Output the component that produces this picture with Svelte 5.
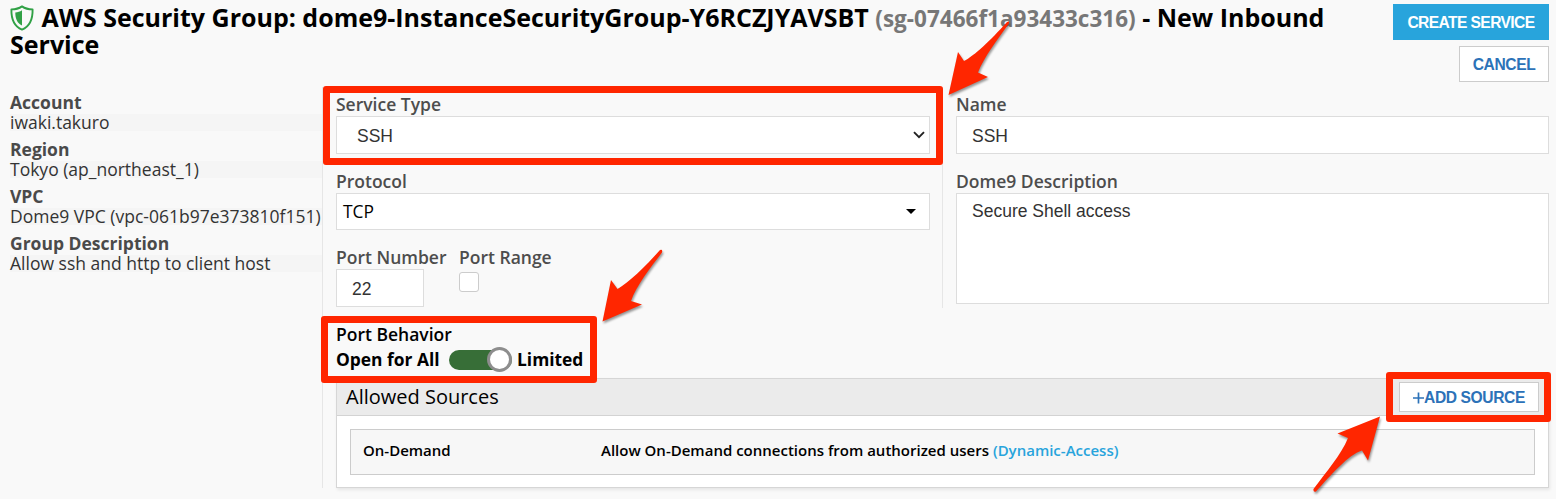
<script>
  const details = [
    ['Account', 'iwaki.takuro'],
    ['Region', 'Tokyo (ap_northeast_1)'],
    ['VPC', 'Dome9 VPC (vpc-061b97e373810f151)'],
    ['Group Description', 'Allow ssh and http to client host']
  ];
</script>

<div class="page">
  <header>
    <h1>
      <svg class="shield" viewBox="0 0 24 26" width="24" height="26"><path d="M12 1.4C9 3.5 5 4.4 1.4 4.4C1.2 14 3.5 21 12 24.6C20.500 21 22.800 14 22.600 4.400C19 4.400 15 3.500 12 1.400Z" fill="none" stroke="#31a146" stroke-width="1.9" stroke-linejoin="round" /><path d="M12 5.200C10 6.600 7.800 7.300 5.300 7.500C5.300 13.500 7 18 12 20.600Z" fill="#31a146" /></svg>
      AWS Security Group: dome9-InstanceSecurityGroup-Y6RCZJYAVSBT
      <span class="gid">(sg-07466f1a93433c316)</span>
      - New Inbound Service
    </h1>
    <div class="buttons">
      <button class="primary">CREATE SERVICE</button>
      <button class="cancel">CANCEL</button>
    </div>
  </header>

  <div class="body">
    <aside>
      {#each details as [label, value]}
        <div class="detail"><b>{label}</b><div><span>{value}</span></div></div>
      {/each}
    </aside>
    <main>
      <div class="form">
        <section class="left">
          <div class="field first">
            <div class="label">Service Type</div>
            <div class="control select"><span>SSH</span>
              <svg width="12" height="8" viewBox="0 0 12 8"><path d="M1 1.200L6 6.200L11 1.200" fill="none" stroke="#222" stroke-width="1.900" /></svg>
            </div>
          </div>
          <div class="field second">
            <div class="label">Protocol</div>
            <div class="control protocol"><span>TCP</span><i></i></div>
          </div>
          <div class="ports">
            <div class="number"><div class="label">Port Number</div><div class="control port">22</div></div>
            <div><div class="label">Port Range</div><div class="check"></div></div>
          </div>
        </section>
        <section class="right">
          <div class="field first"><div class="label">Name</div><div class="control text">SSH</div></div>
          <div class="field second"><div class="label">Dome9 Description</div><div class="control area">Secure Shell access</div></div>
        </section>
      </div>
      <div class="behavior">
        <div class="label">Port Behavior</div>
        <div class="switch"><b class="open">Open for All</b><div class="track"><div class="knob"></div></div><b class="limited">Limited</b></div>
      </div>
      <div class="card">
        <div class="cardhead"><span>Allowed Sources</span>
          <button class="add"><svg width="11" height="12" viewBox="0 0 11 12"><path d="M5.500 0.500V11.500M0 6H11" stroke="#2c72b8" stroke-width="1.700" /></svg>ADD SOURCE</button>
        </div>
        <div class="row"><span class="kind">On-Demand</span><span class="desc">Allow On-Demand connections from authorized users <span class="link">(Dynamic-Access)</span></span></div>
      </div>
    </main>
  </div>

  <div class="mark m1"></div>
  <div class="mark m2"></div>
  <div class="mark m3"></div>
  <svg class="arrows" width="1556" height="499" viewBox="0 0 1556 499">
    <g fill="#ff2600">
      <path d="M948.500 95L958 52L964 61C974 56 991 40 1006.500 22.500Q1009.500 20 1009 23.500C997 40 984 57 978 72.500L988 77Z" />
      <path d="M602.500 321.500L611 280L617.500 289C628 283 645 267 660 250Q663 249 662 252.500C651 267 636 286 631 301L642 304.500Z" />
      <path d="M1380 416.500L1337.500 433.500L1348 438C1341 455 1326 472 1313.500 489Q1313 492.500 1316 491.500C1332 474 1348 455 1362 450.500L1368 460.500Z" />
    </g>
  </svg>
</div>

<style>
  :global(body) { margin: 0; background: #f9f9f9; }
  .page, .page * { box-sizing: border-box; }
  .page { position: relative; width: 1556px; height: 499px; overflow: hidden; font-family: "Open Sans", sans-serif; color: #000; background: #f9f9f9; }
  header { display: flex; justify-content: space-between; height: 87px; padding: 4px 7px 0 10px; }
  h1 { margin: 0; width: 1340px; font-size: 25px; line-height: 27px; font-weight: 700; }
  .shield { vertical-align: -4px; margin: -1px 1px -4px 0; transform: translateY(-4px); }
  .gid { font-size: 22.500px; line-height: 20px; color: #777; }
  .buttons { display: flex; flex-direction: column; align-items: flex-end; gap: 6px; }
  button { font: 700 15.600px "Liberation Sans", Arial, sans-serif; height: 36px; padding: 1px 0 0; border: 1px solid #ccc; background: #fff; color: #2c72b8; white-space: nowrap; letter-spacing: -.4px; }
  .primary { width: 156px; background: #28a4dc; border-color: #28a4dc; color: #fff; letter-spacing: -.6px; }
  .cancel { width: 90px; }
  .body { display: flex; height: 401px; }
  aside { width: 323px; padding: 6px 0 0 10px; border-right: 1px solid #e6e6e6; }
  .detail { height: 47px; font-size: 17.500px; line-height: 20px; white-space: nowrap; color: #333; }
  .detail b { display: block; height: 20px; line-height: 18px; color: #4a4a4a; }
  .detail > div { height: 17px; margin-top: 1px; line-height: 17px; background: #f5f5f5; }
  main { flex: 1; padding: 0 7px 0 13px; }
  .form { display: flex; height: 221px; }
  .left { width: 607px; padding: 8px 12px 0 0; border-right: 1px solid #e6e6e6; }
  .right { flex: 1; padding: 8px 0 0 13px; }
  .label { height: 21px; line-height: 18px; font-size: 17.500px; font-weight: 600; color: #4d4d4d; white-space: nowrap; }
  .first { height: 77px; }
  .control { border: 1px solid #ddd; background: #fff; color: #333; font: 17.500px/38px "Liberation Sans", Arial, sans-serif; height: 38px; }
  .select { display: flex; align-items: center; justify-content: space-between; padding: 0 4px 0 20px; }
  .select span { padding-top: 2px; }
  .protocol { display: flex; align-items: center; justify-content: space-between; height: 37px; padding: 0 13px 0 6px; font: 17.400px/35px "Open Sans", sans-serif; color: #000; }
  .protocol i { border: 5px solid transparent; border-top-color: #000; border-bottom: 0; }
  .text, .port { padding-left: 15px; }
  .area { height: 111px; line-height: 34px; padding-left: 15px; }
  .second { height: 76px; }
  .ports { display: flex; }
  .number { width: 123px; }
  .port { width: 88px; }
  .check { width: 20px; height: 20px; border: 1px solid #ccc; border-radius: 3px; background: #fff; margin-top: 3px; }
  .behavior { height: 70px; padding-top: 17px; }
  .behavior .label { color: #000; height: 22px; }
  .switch { display: flex; align-items: center; height: 25px; font-size: 17.400px; white-space: nowrap; }
  .switch b { padding-bottom: 2px; }
  .open { width: 113px; }
  .track { width: 63px; height: 20px; border-radius: 10px; background: #376e37; display: flex; align-items: center; justify-content: flex-end; flex: none; }
  .knob { width: 25px; height: 25px; border: 3px solid #8d8d8d; border-radius: 50%; background: #fff; flex: none; }
  .limited { margin-left: 5px; }
  .card { height: 110px; border: 1px solid #d6d6d6; background: #fff; box-shadow: 1px 2px 3px rgba(0,0,0,.08); }
  .cardhead { height: 37px; border-bottom: 1px solid #d3d3d3; background: #ebebeb; display: flex; justify-content: space-between; align-items: center; padding: 0 9px; font-size: 20px; }
  .cardhead > span { padding-bottom: 2px; }
  .add { width: 140px; height: 30px; display: flex; align-items: center; justify-content: center; padding: 1px 0 0; }
  .row { margin: 13px 13px 0; height: 46px; border: 1px solid #ccc; background: #f7f7f7; display: flex; align-items: center; padding: 0 0 4px 12px; font-size: 15px; font-weight: 600; white-space: nowrap; }
  .kind { width: 238px; }
  .link { color: #28a4dc; }
  .mark { position: absolute; border: 7px solid #ff2600; border-radius: 3px; }
  .m1 { left: 323px; top: 86px; width: 620px; height: 79px; }
  .m2 { left: 321px; top: 316px; width: 276px; height: 67px; }
  .m3 { left: 1386px; top: 372px; width: 165px; height: 50px; }
  .arrows { position: absolute; left: 0; top: 0; filter: drop-shadow(1px 2px 1px rgba(0,0,0,.4)); }
</style>
